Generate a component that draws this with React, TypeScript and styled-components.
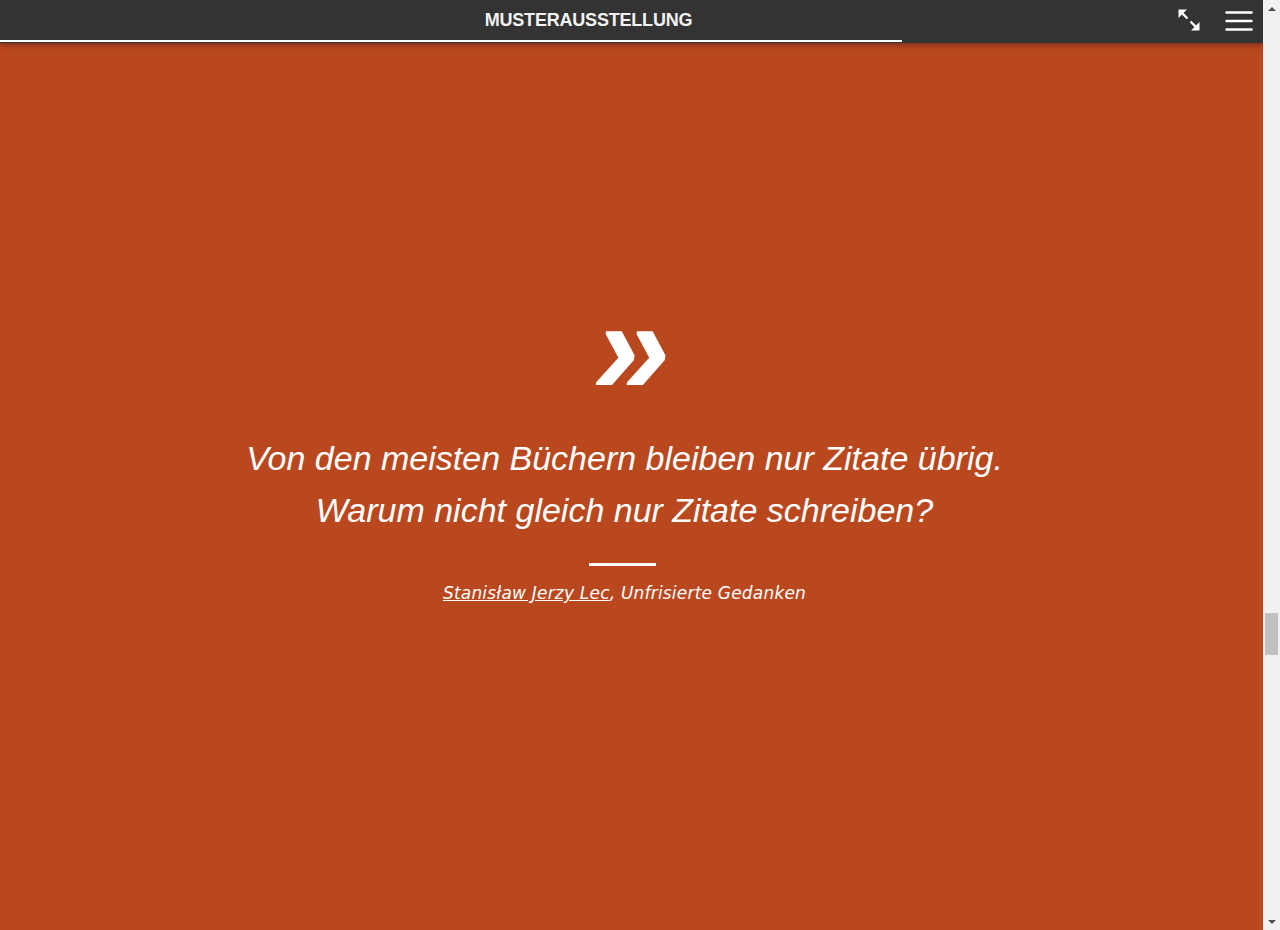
import React from "react";
import styled, { createGlobalStyle } from "styled-components";

const GlobalStyle = createGlobalStyle`
  html, body { height: 100%; overflow: hidden; }
  body {
    margin: 0;
    background: #ba481f;
    font-family: "Liberation Sans", Arial, sans-serif;
  }
  #root { height: 100%; }
  * { box-sizing: border-box; }
`;

const Page = styled.div`
  display: flex;
  height: 100vh;
  width: 100%;
`;

const Viewport = styled.div`
  position: relative;
  flex: 1;
  min-width: 0;
  height: 100%;
  overflow: hidden;
  background: #ba481f;
`;

const Header = styled.header`
  position: absolute;
  top: 0;
  left: 0;
  right: 0;
  height: 43px;
  background: #333333;
  box-shadow: 0 2px 6px rgba(0, 0, 0, 0.35);
  display: flex;
  flex-direction: column;
  z-index: 10;
`;

const HeaderRow = styled.div`
  height: 40px;
  display: flex;
  align-items: center;
  padding-right: 10px;
`;

const Title = styled.h1`
  flex: 1;
  margin: 0;
  text-align: center;
  font-family: "Liberation Sans", Arial, sans-serif;
  font-weight: 700;
  font-size: 18px;
  letter-spacing: -0.2px;
  color: #f2f2f2;
  text-transform: uppercase;
`;

const IconGroup = styled.div`
  display: flex;
  align-items: center;
  gap: 24px;
`;

const IconButton = styled.button`
  border: 0;
  padding: 0;
  background: none;
  display: flex;
  align-items: center;
  justify-content: center;
  color: #ffffff;
  cursor: pointer;
`;

const ProgressTrack = styled.div`
  height: 2px;
  width: 100%;
`;

const ProgressFill = styled.div`
  height: 100%;
  background: #ffffff;
`;

const QuoteSection = styled.section`
  height: 100%;
  display: flex;
  flex-direction: column;
  align-items: center;
  justify-content: center;
  color: #ffffff;
  padding-right: 14px;
  padding-bottom: 10px;
`;

const QuoteMark = styled.div`
  font-family: "Liberation Sans", Arial, sans-serif;
  font-weight: 700;
  font-style: italic;
  font-size: 138px;
  line-height: 60px;
  height: 60px;
  color: #ffffff;
  margin: 0 0 56px 14px;
`;

const QuoteText = styled.blockquote`
  margin: 0;
  text-align: center;
  font-family: "Liberation Sans", Arial, sans-serif;
  font-style: italic;
  font-size: 34px;
  line-height: 52px;
  color: #ffffff;
`;

const Divider = styled.hr`
  width: 67px;
  height: 3px;
  border: 0;
  background: #ffffff;
  margin: 27px 4px 16px 0;
`;

const Source = styled.cite`
  font-family: "DejaVu Sans", "Open Sans", sans-serif;
  font-style: italic;
  font-size: 17px;
  line-height: 22px;
  color: #ffffff;
  letter-spacing: 0.2px;
`;

const SourceLink = styled.a`
  color: #ffffff;
  text-decoration: underline;
`;

const ScrollRail = styled.div`
  width: 17px;
  height: 100%;
  background: #f1f1f1;
  display: flex;
  flex-direction: column;
`;

const ScrollArrow = styled.div<{ $down?: boolean }>`
  height: 17px;
  display: flex;
  align-items: center;
  justify-content: center;
  &::after {
    content: "";
    width: 0;
    height: 0;
    border-left: 4px solid transparent;
    border-right: 4px solid transparent;
    ${(p) =>
      p.$down
        ? "border-top: 4px solid #505050;"
        : "border-bottom: 4px solid #505050;"}
  }
`;

const ScrollTrack = styled.div`
  flex: 1;
  display: flex;
  flex-direction: column;
  padding: 0 2px;
`;

const ScrollThumb = styled.div<{ $offset: number; $size: number }>`
  margin-top: ${(p) => p.$offset}px;
  height: ${(p) => p.$size}px;
  background: #c1c1c1;
`;

const ExpandIcon = () => (
  <svg width="24" height="24" viewBox="0 0 24 24" fill="none">
    <path d="M1.5 1.5 L10 1.5 L1.5 10 Z" fill="#fff" />
    <line x1="4" y1="4" x2="10.5" y2="10.5" stroke="#fff" strokeWidth="2.4" />
    <path d="M22.5 22.5 L14 22.5 L22.5 14 Z" fill="#fff" />
    <line x1="20" y1="20" x2="13.5" y2="13.5" stroke="#fff" strokeWidth="2.4" />
  </svg>
);

const MenuIcon = () => (
  <svg width="28" height="24" viewBox="0 0 28 24" fill="none">
    <line x1="1.5" y1="4.5" x2="26.5" y2="4.5" stroke="#fff" strokeWidth="2.4" strokeLinecap="round" />
    <line x1="1.5" y1="13" x2="26.5" y2="13" stroke="#fff" strokeWidth="2.4" strokeLinecap="round" />
    <line x1="1.5" y1="21.5" x2="26.5" y2="21.5" stroke="#fff" strokeWidth="2.4" strokeLinecap="round" />
  </svg>
);

export default function App() {
  const progress = 71.4;

  return (
    <>
      <GlobalStyle />
      <Page>
        <Viewport>
          <Header>
            <HeaderRow>
              <Title>Musterausstellung</Title>
              <IconGroup>
                <IconButton aria-label="Vollbild">
                  <ExpandIcon />
                </IconButton>
                <IconButton aria-label="Menü">
                  <MenuIcon />
                </IconButton>
              </IconGroup>
            </HeaderRow>
            <ProgressTrack>
              <ProgressFill style={{ width: `${progress}%` }} />
            </ProgressTrack>
          </Header>
          <QuoteSection>
            <QuoteMark>»</QuoteMark>
            <QuoteText>
              Von den meisten Büchern bleiben nur Zitate übrig.
              <br />
              Warum nicht gleich nur Zitate schreiben?
            </QuoteText>
            <Divider />
            <Source>
              <SourceLink href="#">Stanisław Jerzy Lec</SourceLink>, Unfrisierte Gedanken
            </Source>
          </QuoteSection>
        </Viewport>
        <ScrollRail aria-hidden="true">
          <ScrollArrow />
          <ScrollTrack>
            <ScrollThumb $offset={596} $size={42} />
          </ScrollTrack>
          <ScrollArrow $down />
        </ScrollRail>
      </Page>
    </>
  );
}
